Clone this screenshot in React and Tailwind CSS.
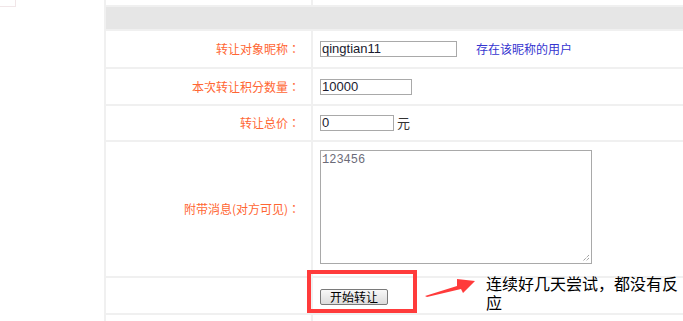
import React from "react";

const cjk = { fontFamily: '"Noto Sans CJK SC", "Liberation Sans", sans-serif' };
const cjkTc = { fontFamily: '"Noto Sans CJK TC", "Noto Sans CJK SC", "Liberation Sans", sans-serif' };

function Label({ children }) {
  return (
    <div
      className="bg-white flex items-center justify-end pr-[11px] text-[12px] text-[#ff6633]"
      style={cjkTc}
    >
      {children}
    </div>
  );
}

export default function App() {
  return (
    <div className="relative w-[683px] h-[321px] overflow-hidden bg-white">
      <div className="flex h-full">
        <div className="w-[104px] shrink-0 bg-white relative">
          <div className="w-[16px] h-[7px] border-r border-b border-[#f1e6e8]" />
        </div>
        <div className="flex-1 bg-[#f0f0f0] pl-[2px] flex flex-col gap-[2px]">
          <div className="grid grid-cols-[205px_1fr] gap-[2px] h-[5px] shrink-0">
            <div className="bg-white" />
            <div className="bg-white" />
          </div>
          <div className="h-[22px] shrink-0 bg-[#e6e6e6]" />
          <div className="grid grid-cols-[205px_1fr] gap-[2px] h-[36px] shrink-0">
            <Label>转让对象昵称：</Label>
            <div className="bg-white flex items-center pl-[7px]">
              <div
                className="w-[137px] h-[16px] border border-[#a9a9a9] text-[13px] leading-[14px] text-[#1a1a2e] pl-[1px]"
                style={{ fontFamily: '"Liberation Sans", Arial, sans-serif' }}
              >
                qingtian11
              </div>
              <span className="ml-[19px] text-[12px] text-[#3535d0]" style={cjk}>
                存在该昵称的用户
              </span>
            </div>
          </div>
          <div className="grid grid-cols-[205px_1fr] gap-[2px] h-[35px] shrink-0">
            <Label>本次转让积分数量：</Label>
            <div className="bg-white flex items-center pl-[7px]">
              <div
                className="w-[92px] h-[16px] border border-[#a9a9a9] text-[13px] leading-[14px] text-[#1a1a2e] pl-[1px]"
                style={{ fontFamily: '"Liberation Sans", Arial, sans-serif' }}
              >
                10000
              </div>
            </div>
          </div>
          <div className="grid grid-cols-[205px_1fr] gap-[2px] h-[34px] shrink-0">
            <Label>转让总价：</Label>
            <div className="bg-white flex items-center pl-[7px]">
              <div
                className="w-[74px] h-[16px] border border-[#a9a9a9] text-[13px] leading-[14px] text-[#1a1a2e] pl-[1px]"
                style={{ fontFamily: '"Liberation Sans", Arial, sans-serif' }}
              >
                0
              </div>
              <span className="ml-[3px] text-[13px] text-[#333]" style={cjk}>
                元
              </span>
            </div>
          </div>
          <div className="grid grid-cols-[205px_1fr] gap-[2px] h-[134px] shrink-0">
            <Label>附带消息(对方可见)：</Label>
            <div className="bg-white pl-[7px] pt-[8px]">
              <div className="relative w-[272px] h-[114px] border border-[#a9a9a9]">
                <div
                  className="text-[12px] leading-[16px] text-[#6b6b78] pl-[1px] pt-[1px]"
                  style={{ fontFamily: '"Liberation Mono", monospace' }}
                >
                  123456
                </div>
                <svg className="absolute right-[1px] bottom-[1px]" width="8" height="8" viewBox="0 0 8 8">
                  <path d="M7 1 L1 7 M7 4 L4 7" stroke="#777" strokeWidth="1" strokeDasharray="1 1" />
                </svg>
              </div>
            </div>
          </div>
          <div className="grid grid-cols-[205px_1fr] gap-[2px] h-[35px] shrink-0">
            <div className="bg-white" />
            <div className="bg-white flex items-center pl-[7px] pt-[2px]">
              <button
                className="w-[68px] h-[16px] border border-[#7a7a7a] rounded-[2px] bg-gradient-to-b from-[#f8f8f8] to-[#dcdcdc] text-[12px] leading-[14px] text-black flex items-center justify-center"
                style={cjk}
              >
                开始转让
              </button>
            </div>
          </div>
          <div className="grid grid-cols-[205px_1fr] gap-[2px] h-[20px] shrink-0">
            <div className="bg-white" />
            <div className="bg-white" />
          </div>
        </div>
      </div>

      <div className="absolute left-[307px] top-[270px] w-[110px] h-[43px] border-[4px] border-[#ff3b3b]" />
      <svg className="absolute left-0 top-0" width="683" height="321" viewBox="0 0 683 321">
        <polygon
          points="425,296 457,286 457,279 475,281 463,293 461,289 427,297"
          fill="#ff3b3b"
        />
      </svg>
      <div
        className="absolute left-[486px] top-[274px] w-[197px] text-[16px] leading-[19px] text-black"
        style={cjk}
      >
        连续好几天尝试，都没有反应
      </div>
    </div>
  );
}
